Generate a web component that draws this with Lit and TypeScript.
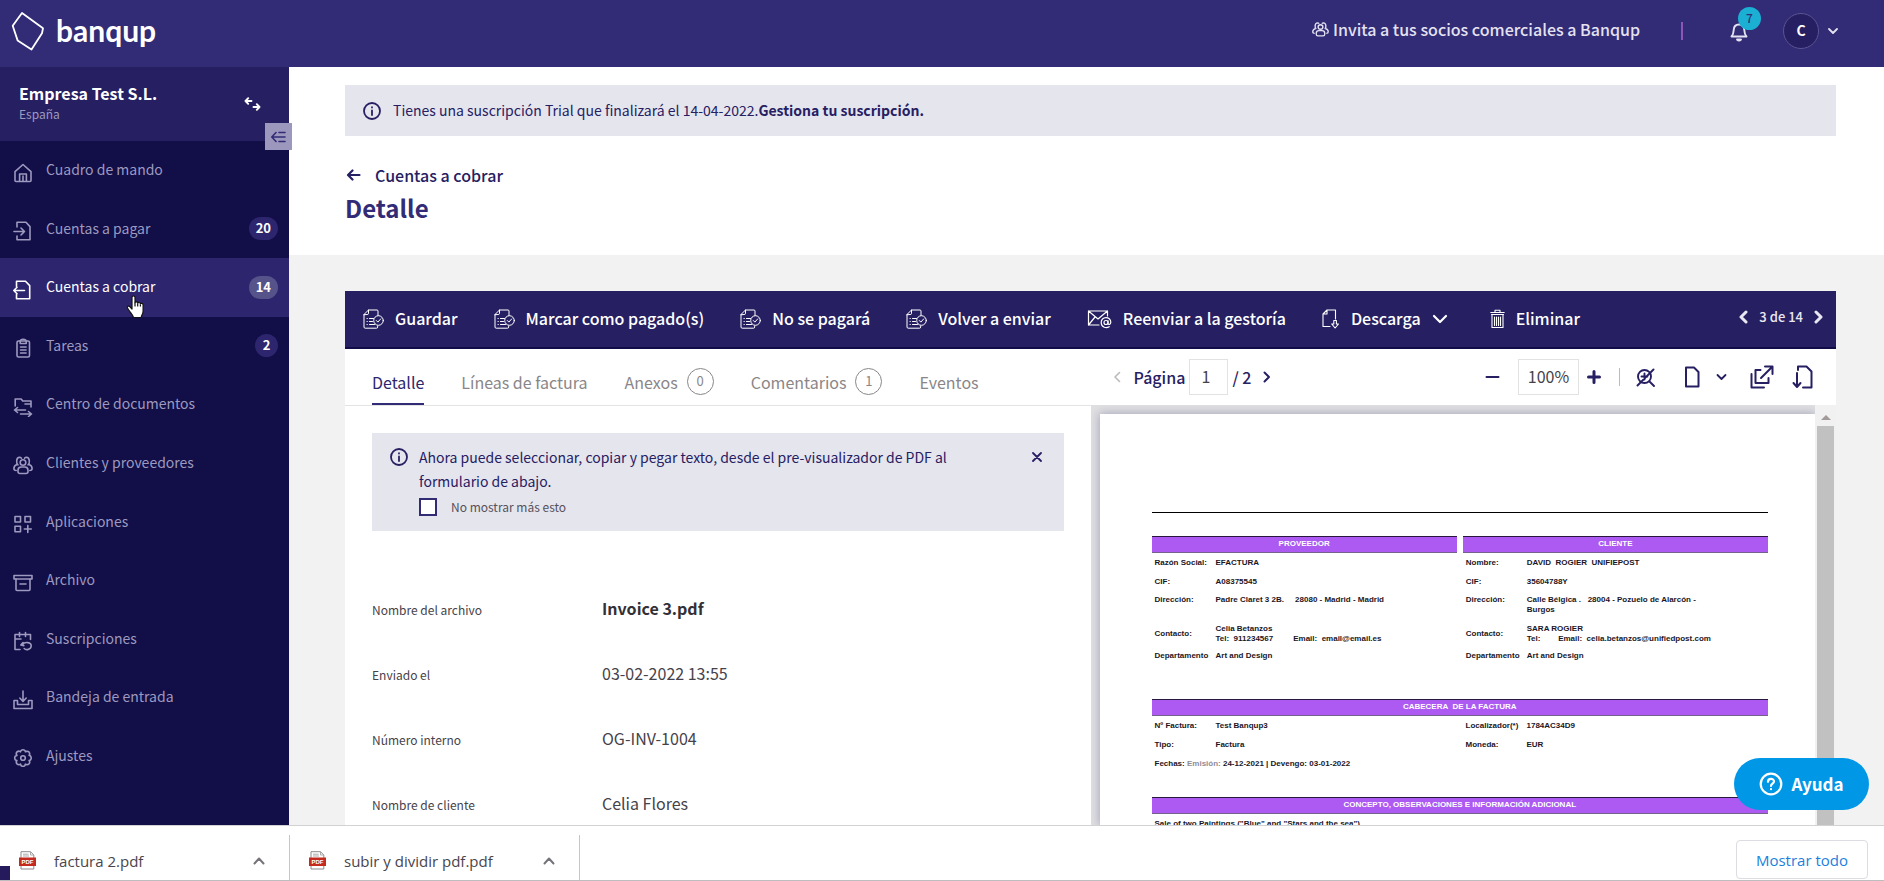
import { LitElement, html, svg, css, nothing } from "lit";
import { customElement, property, state } from "lit/decorators.js";
import { classMap } from "lit/directives/class-map.js";

const shared = css`
  :host { box-sizing: border-box; }
  *, *::before, *::after { box-sizing: border-box; }
  button { font: inherit; color: inherit; background: none; border: 0; padding: 0; margin: 0; cursor: pointer; }
  a { color: inherit; text-decoration: none; }
  ul { list-style: none; margin: 0; padding: 0; }
  svg { display: block; flex: none; }
`;

const ic = (w: number, h: number, body: unknown, sw = 1.6) => html`<svg
  width=${w} height=${h} viewBox="0 0 ${w} ${h}" fill="none" stroke="currentColor"
  stroke-width=${sw} stroke-linecap="round" stroke-linejoin="round" aria-hidden="true">${body}</svg>`;

const people = svg`
  <circle cx="10" cy="7.500" r="2.800"/>
  <path d="M5 16.500v-1.200c0-2 1.500-3.300 3.200-3.300h3.600c1.700 0 3.200 1.300 3.200 3.300v1.200q0 2-2 2H7q-2 0-2-2z"/>
  <path d="M5 9.800C3 8.500 3 2.500 6.500 2.300q1.200 0 2 .9M15 9.800c2-1.300 2-7.300-1.500-7.500q-1.200 0-2 .9"/>
  <path d="M4 9.500C2 10.200.9 11.700.9 13.500c0 1.500.9 2 2.300 2M16 9.500c2 .7 3.100 2.200 3.100 4 0 1.500-.9 2-2.300 2"/>`;

const navIcons: Record<string, unknown> = {
  home: svg`<path d="M2 8.600 10 1.500l8 7.100V17.500q0 1-1 1H3q-1 0-1-1zM6.600 18.500v-7.500h6.800v7.500M10 13v5"/>`,
  pay: svg`<path d="M4 6V1.200h9L17 5.600v13.200H4V15M1 10.500h10.500M8 7l3.500 3.500L8 14"/>`,
  collect: svg`<path d="M3.500 6.500V1.200h9l4.200 4.400v13.200H3.500v-4.300M11.500 10.500H.8M4 7.300.8 10.500 4 13.700"/>`,
  tasks: svg`<rect x="4" y="3" width="12.500" height="16" rx="1.500"/><path d="M7.200 5.500V3q.2-1.500 3-1.800 2.800.3 3 1.800v2.500zM7.500 9h5.600M7.500 12h5.600M7.500 15h5.600"/>`,
  docs: svg`<path d="M2.200 9V2h6l1.500 2H18v6M9.700 4H18M12 7h6M1.500 13h11M4.500 10.500 1.500 13l3 2.500M7.500 17h11M15.500 14.500l3 2.500-3 2.500"/>`,
  people,
  apps: svg`<rect x="2" y="2.500" width="5.500" height="5.500"/><rect x="12" y="2.500" width="5.500" height="5.500"/><rect x="2" y="12.200" width="5.500" height="5.500"/><path d="M14.800 11.500v7M11.300 15h7"/>`,
  archive: svg`<rect x="1" y="2.500" width="18" height="3.500"/><path d="M3 6v10.500q0 1 1 1h12q1 0 1-1V6M7 11h6"/>`,
  subs: svg`<path d="M7 18.500H2V3.500h15.500v5M2 8h6M6.500 1.500v4M12.500 1.500v4M10 11.500 7.800 14l3 .6M9.500 13.500c2-3.200 9-2.400 8.700 1.500-.3 3.800-5.200 4.400-7 2.500"/>`,
  inbox: svg`<path d="M10 1v10M6.800 8l3.200 3.500L13.200 8M4.500 10.500H1v8h18v-8h-3.500M4.500 11v3.500h11V11"/>`,
  settings: svg`<path d="M8 2.500q2-1.600 4 0l.4 1.300 1.400-.6q2.500-.2 3 2.700l-.7 1.400 1.400.7q1.400 2 0 4l-1.400.6.700 1.400q-.3 2.600-2.900 2.800l-1.500-.7-.5 1.500q-1.900 1.400-3.900 0l-.5-1.500-1.400.7q-2.700-.2-2.900-2.900l.7-1.400-1.500-.5q-1.400-2 0-4l1.500-.6-.7-1.500q.2-2.600 2.900-2.800l1.400.7z"/><circle cx="10" cy="10" r="2.300"/>`,
};

const infoIcon = ic(20, 20, svg`<circle cx="10" cy="10" r="8"/><path d="M10 9.500v4.500M10 6.200v.4"/>`, 1.8);

@customElement("bq-header")
class BqHeader extends LitElement {
  static styles = [shared, css`
    :host { display: flex; align-items: center; height: 67px; flex: none; padding: 0 46px 5px 11px; background: #322b76; color: #e4e2f0; }
    .logo { display: flex; align-items: center; gap: 11px; color: #fff; font: 700 30px/40px Lato, "Open Sans", sans-serif; }
    .word { padding-bottom: 3px; }
    .right { margin-left: auto; display: flex; align-items: center; }
    .invite { display: flex; align-items: center; gap: 4px; font-weight: 500; font-size: 16px; line-height: 24px; padding-bottom: 4px; }
    .rule { width: 2px; height: 18px; background: #8c56b8; margin: 0 46px 0 41px; }
    .bell { position: relative; width: 20px; height: 24px; }
    .count { position: absolute; left: 9px; top: -12px; width: 23px; height: 23px; border-radius: 50%; background: #1aafd3; color: #322b76; font: 500 12px/22px "Noto Sans CJK SC", sans-serif; text-align: center; }
    .user { display: flex; align-items: center; gap: 9px; margin-left: 34px; }
    .avatar { width: 36px; height: 36px; border-radius: 50%; border: 1px solid #5a5492; background: #262062; color: #fff; font-weight: 700; font-size: 14px; line-height: 32px; text-align: center; }
  `];
  render() {
    return html`
      <a class="logo" href="#">
        ${ic(34, 40, svg`<path d="M11 2 32 17.300 31 22.300 20.500 38.500 6.600 29.400 1.700 14.700z"/>`, 1.8)}
        <span class="word">banqup</span>
      </a>
      <div class="right">
        <a class="invite" href="#"><svg width="17" height="16" viewBox="0 0 20 20" preserveAspectRatio="none" fill="none" stroke="currentColor" stroke-width="1.600">${people}</svg>Invita a tus socios comerciales a Banqup</a>
        <span class="rule"></span>
        <button class="bell" aria-label="Notificaciones">
          ${ic(20, 24, svg`<path d="M2.500 17.500c2-2 2-3 2.200-6.500.2-3.500 2-5.500 5.300-5.500s5.100 2 5.300 5.500c.2 3.500.2 4.500 2.200 6.500zM8 20.500q2 2.200 4 0z"/>`, 1.9)}
          <span class="count">7</span>
        </button>
        <button class="user" aria-label="Cuenta"><span class="avatar">C</span>${ic(10, 8, svg`<path d="m1 2 4 4 4-4"/>`, 1.8)}</button>
      </div>`;
  }
}

const NAV = [
  { label: "Cuadro de mando", icon: "home" },
  { label: "Cuentas a pagar", icon: "pay", count: 20 },
  { label: "Cuentas a cobrar", icon: "collect", count: 14 },
  { label: "Tareas", icon: "tasks", count: 2 },
  { label: "Centro de documentos", icon: "docs" },
  { label: "Clientes y proveedores", icon: "people" },
  { label: "Aplicaciones", icon: "apps" },
  { label: "Archivo", icon: "archive" },
  { label: "Suscripciones", icon: "subs" },
  { label: "Bandeja de entrada", icon: "inbox" },
  { label: "Ajustes", icon: "settings" },
];

@customElement("bq-sidebar")
class BqSidebar extends LitElement {
  @state() active = "Cuentas a cobrar";
  static styles = [shared, css`
    :host { display: flex; flex-direction: column; width: 289px; flex: none; background: #110e48; color: #9d99bf; position: relative; z-index: 1; }
    .company { display: flex; align-items: center; justify-content: space-between; height: 74px; flex: none; padding: 0 28px 0 19px; background: #262062; }
    .name { color: #fff; font-weight: 700; font-size: 16px; line-height: 24px; }
    .country { font-size: 12px; line-height: 18px; padding-bottom: 4px; }
    .company button { color: #fff; }
    .collapse { position: absolute; left: 265px; top: 56px; width: 27px; height: 27px; background: #9c97bd; color: #322b76; display: grid; place-items: center; }
    ul { flex: 1; display: grid; grid-auto-rows: minmax(58px, 1fr); padding-bottom: 40px; }
    li { position: relative; display: grid; }
    a { display: flex; align-items: center; padding: 0 11px 0 13px; font-size: 14px; line-height: 20px; }
    a svg { margin: 5px 13px 0 0; }
    .label { padding-bottom: 2px; }
    .on { background: #2d266e; color: #fff; }
    .count { margin-left: auto; min-width: 23px; height: 23px; padding: 0 7px; border-radius: 12px; background: #2d266e; color: #fff; font-weight: 700; font-size: 13px; line-height: 22px; text-align: center; }
    .on .count { background: #56528a; }
    .pointer { position: absolute; left: 126px; top: 37px; }
  `];
  render() {
    return html`
      <div class="company">
        <div><div class="name">Empresa Test S.L.</div><div class="country">España</div></div>
        <button aria-label="Cambiar de empresa">${ic(17, 14, svg`<path d="M1.500 4h6M4.200 1.200 1.500 4l2.700 2.800M9.500 10h6M12.800 7.200l2.700 2.800-2.700 2.800"/>`, 1.9)}</button>
      </div>
      <button class="collapse" aria-label="Contraer menú">${ic(15, 14, svg`<path d="M1 7h13M5 2.500.8 7 5 11.500M8 2.500h6M8 11.500h6"/>`)}</button>
      <ul>${NAV.map(n => html`<li>
        <a href="#" class=${classMap({ on: n.label === this.active })} @click=${(e: Event) => { e.preventDefault(); this.active = n.label; }}>
          ${ic(20, 20, navIcons[n.icon])}<span class="label">${n.label}</span>
          ${n.count ? html`<span class="count">${n.count}</span>` : nothing}
        </a>
        ${n.icon === "collect" ? html`<svg class="pointer" width="19" height="24" viewBox="0 0 19 24" fill="#fff" stroke="#111" stroke-width="1.200" stroke-linejoin="round"><path d="M6 2.500c0-2 3-2 3 0v5.200c.3-1.200 2.700-1 2.700.5.400-1.200 2.700-.8 2.700.7.500-1 2.700-.8 2.700 1V16c0 3-1.600 4-1.900 6.500H7.500C6.800 19.500 3.500 17 1.500 13c-.8-1.700 1.200-2.600 2.500-1.200L6 14z"/><path d="M9 7.500v4M11.700 8.500v3M14.400 9.500v2"/></svg>` : nothing}
      </li>`)}</ul>`;
  }
}

const docCheck = ic(21, 20, svg`<path d="M5.500 1H14q1 0 1 1v4.500M1 5.500V18q0 1.200 1.200 1.200H13.500q1.200 0 1.200-1.200v-1M1 5.500 5.500 1v3.500q0 1-1 1zM4 9.500h.3M6.500 9.500h4M4 12.500h.3M6.500 12.500h3M4 15.500h.3M6.500 15.500h5"/><circle cx="15.500" cy="11.500" r="4.800"/><path d="m13.300 11.500 1.600 1.600 2.800-3.200"/>`, 1);
const ACTIONS = [
  { label: "Guardar", icon: docCheck },
  { label: "Marcar como pagado(s)", icon: docCheck },
  { label: "No se pagará", icon: docCheck },
  { label: "Volver a enviar", icon: docCheck },
  { label: "Reenviar a la gestoría", icon: ic(25, 20, svg`<path d="M12 16H1.500V2h19v5M1.500 2 11 10l9.500-8M1.500 16l6.500-8"/><circle cx="19" cy="13.500" r="2"/><path d="M21 11.500v3c.2 1.600 2.800 1.300 2.800-1.200 0-6.600-10-6-9.600.4.200 5 5.300 5.800 8 4"/>`, 1.2) },
  { label: "Descarga", icon: ic(18, 20, svg`<path d="M8 17.500H1V5l4-4h8.500v9M5 1v4H1"/><path d="M11.800 11.500h2.600v3.500h2.100L13.100 19l-3.400-4h2.100z"/>`, 1.1), more: true },
  { label: "Eliminar", icon: ic(15, 20, svg`<path d="M.8 3.500h13.400M5 3.200V1.200h5v2M2 6v12.500h11V6M1.500 5.500h12M4.500 8v8.500M6.500 8v8.500M8.500 8v8.500M10.500 8v8.500"/>`, 1.1) },
];

@customElement("bq-actions")
class BqActions extends LitElement {
  static styles = [shared, css`
    :host { display: flex; align-items: center; height: 58px; padding: 0 12px 0 18px; gap: 36px; background: #262062; border-bottom: 2px solid #120c48; color: #fff; font-size: 16px; line-height: 24px; white-space: nowrap; }
    .act { display: flex; align-items: center; gap: 11px; font-weight: 500; }
    .label { padding-bottom: 2px; }
    .pager { margin-left: auto; display: flex; align-items: center; gap: 11px; font-weight: 500; font-size: 13px; line-height: 20px; color: #e9e8f2; padding-bottom: 4px; }
    .more { margin-right: 6px; }
  `];
  render() {
    return html`
      ${ACTIONS.map(a => html`<button class="act">${a.icon}<span class="label">${a.label}</span>${a.more ? html`<span class="more">${ic(16, 10, svg`<path d="m2 2 6 6 6-6"/>`, 2.2)}</span>` : nothing}</button>`)}
      <div class="pager">
        <button aria-label="Anterior">${ic(10, 14, svg`<path d="M8 2 3 7l5 5"/>`, 3)}</button>
        <span>3 de 14</span>
        <button aria-label="Siguiente">${ic(10, 14, svg`<path d="m2 2 5 5-5 5"/>`, 3)}</button>
      </div>`;
  }
}

const TABS: { label: string; count?: number }[] = [
  { label: "Detalle" }, { label: "Líneas de factura" }, { label: "Anexos", count: 0 }, { label: "Comentarios", count: 1 }, { label: "Eventos" },
];
const FIELDS = [
  ["Nombre del archivo", "Invoice 3.pdf"],
  ["Enviado el", "03-02-2022 13:55"],
  ["Número interno", "OG-INV-1004"],
  ["Nombre de cliente", "Celia Flores"],
];

@customElement("bq-detail")
class BqDetail extends LitElement {
  @state() tab = "Detalle";
  @state() notice = true;
  static styles = [shared, css`
    :host { display: block; flex: 1 1 0; min-width: 0; background: #fff; }
    .tabs { display: flex; gap: 37px; height: 57px; padding: 11px 27px 0; border-bottom: 1px solid #e3e3e3; }
    .tab { display: flex; align-items: center; gap: 9px; color: #8a8688; font-size: 16px; line-height: 24px; border-bottom: 2px solid transparent; white-space: nowrap; }
    .tab.on { color: #2d266e; border-color: #322b76; }
    .num { width: 27px; height: 27px; border: 1px solid #8a8688; border-radius: 50%; font-size: 13px; line-height: 23px; text-align: center; }
    .body { padding: 27px; }
    .notice { display: flex; align-items: flex-start; background: #e5e5ee; color: #262062; padding: 12px 22px 12px 17px; font-size: 14px; line-height: 24px; }
    .notice > svg { margin: 2px 10px 0 0; }
    .copy { flex: 1; max-width: 560px; }
    .check { display: flex; align-items: center; gap: 14px; height: 24px; margin-top: 2px; font-size: 12px; color: #55505a; }
    .check input { appearance: none; width: 18px; height: 18px; margin: 0; border: 2px solid #322b76; background: #fff; }
    .check input:checked { background: #322b76; box-shadow: inset 0 0 0 2px #fff; }
    .close { margin: 7px 0 0 auto; }
    dl { margin: 45px 0 0; }
    .row { display: grid; grid-template-columns: 230px 1fr; align-items: baseline; height: 65px; line-height: 65px; color: #46424a; }
    dt { font-size: 12px; } dd { margin: 0; font-size: 16px; }
    .row:first-child dd { font-weight: 700; color: #333036; }
  `];
  render() {
    return html`
      <div class="tabs" role="tablist">${TABS.map(t => html`<button role="tab" class=${classMap({ tab: true, on: t.label === this.tab })} @click=${() => (this.tab = t.label)}>${t.label}${t.count !== undefined ? html`<span class="num">${t.count}</span>` : nothing}</button>`)}</div>
      <div class="body">
        ${this.notice ? html`<div class="notice">
          ${infoIcon}
          <div class="copy">Ahora puede seleccionar, copiar y pegar texto, desde el pre-visualizador de PDF al formulario de abajo.
            <label class="check"><input type="checkbox">No mostrar más esto</label>
          </div>
          <button class="close" aria-label="Cerrar" @click=${() => (this.notice = false)}>${ic(10, 10, svg`<path d="m1 1 8 8M9 1 1 9"/>`, 1.8)}</button>
        </div>` : nothing}
        <dl>${FIELDS.map(([k, v]) => html`<div class="row"><dt>${k}</dt><dd>${v}</dd></div>`)}</dl>
      </div>`;
  }
}

@customElement("bq-invoice")
class BqInvoice extends LitElement {
  static styles = [shared, css`
    :host { display: block; flex: 1; background: #fff; box-shadow: 0 0 9px 1px #a9a9bd; padding: 98px 47px 0 52px; margin: 9px 0 0 9px; font: 700 8px/10px "Liberation Sans", Arial, sans-serif; color: #1b1626; }
    hr { height: 1px; border: 0; background: #000; margin: 0 0 23px; }
    .two { display: grid; grid-template-columns: 1fr 1fr; gap: 6px; }
    table { width: 100%; border-collapse: collapse; table-layout: fixed; }
    caption { height: 17px; background: #ad5af2; color: #fff; border-top: 1px solid #2a1740; border-bottom: 1px solid #76608c; line-height: 14px; text-align: center; white-space: pre; }
    th { width: 61px; text-align: left; font-weight: 700; white-space: nowrap; }
    th, td { height: 19px; padding: 0 0 0 3px; vertical-align: middle; white-space: pre; }
    .addr th, .addr td { height: 33px; padding-top: 4px; vertical-align: top; }
    .addr td { white-space: pre-wrap; padding-right: 60px; }
    .dept th, .dept td { height: 24px; }
    .head { margin-top: 31px; }
    .concept { margin-top: 24px; }
    .k { width: 61px; } .wide { width: 250px; }
    .soft { color: #8f8b98; }
  `];
  render() {
    return html`
      <hr>
      <div class="two">
        <table><caption>PROVEEDOR</caption>
          <tr><th>Razón Social:</th><td>EFACTURA</td></tr>
          <tr><th>CIF:</th><td>A08375545</td></tr>
          <tr class="addr"><th>Dirección:</th><td>Padre Claret 3 2B.     28080 - Madrid - Madrid</td></tr>
          <tr><th>Contacto:</th><td>${"Celia Betanzos\nTel:  911234567         Email:  email@email.es"}</td></tr>
          <tr class="dept"><th>Departamento</th><td>Art and Design</td></tr>
        </table>
        <table><caption>CLIENTE</caption>
          <tr><th>Nombre:</th><td>DAVID  ROGIER  UNIFIEPOST</td></tr>
          <tr><th>CIF:</th><td>35604788Y</td></tr>
          <tr class="addr"><th>Dirección:</th><td>Calle Bélgica .   28004 - Pozuelo de Alarcón - Burgos</td></tr>
          <tr><th>Contacto:</th><td>${"SARA ROGIER\nTel:        Email:  celia.betanzos@unifiedpost.com"}</td></tr>
          <tr class="dept"><th>Departamento</th><td>Art and Design</td></tr>
        </table>
      </div>
      <table class="head"><caption>CABECERA  DE LA FACTURA</caption>
        <colgroup><col class="k"><col class="wide"><col class="k"><col></colgroup>
        <tr><th>Nº Factura:</th><td>Test Banqup3</td><th>Localizador(*)</th><td>1784AC34D9</td></tr>
        <tr><th>Tipo:</th><td>Factura</td><th>Moneda:</th><td>EUR</td></tr>
        <tr><td colspan="4">Fechas: <span class="soft">Emisión:</span> 24-12-2021 | Devengo: 03-01-2022</td></tr>
      </table>
      <table class="concept"><caption>CONCEPTO, OBSERVACIONES E INFORMACIÓN ADICIONAL</caption>
        <tr><td>Sale of two Paintings ("Blue" and "Stars and the sea")</td></tr>
      </table>`;
  }
}

@customElement("bq-viewer")
class BqViewer extends LitElement {
  static styles = [shared, css`
    :host { display: flex; flex-direction: column; flex: 1 1 0; min-width: 0; background: #fff; color: #262062; font-size: 16px; line-height: 24px; }
    .bar { display: flex; align-items: center; height: 56px; flex: none; padding: 0 23px 0 22px; }
    .page { display: flex; align-items: center; gap: 4px; font-weight: 500; }
    .prev { color: #bbb; margin-right: 9px; } .next { margin-left: 8px; }
    input { height: 36px; border: 1px solid #e2e2e2; background: #fff; font: inherit; font-weight: 400; color: #46424a; padding: 0 0 2px; text-align: center; border-radius: 0; }
    .n { width: 39px; padding: 0 0 2px 11px; text-align: left; } .z { width: 61px; }
    .tools { margin-left: auto; display: flex; align-items: center; }
    .zoom { display: flex; align-items: center; gap: 8px; }
    .minus { margin-right: 10px; }
    .rule { width: 1px; height: 18px; background: #bbb; margin: 0 16px 0 18px; }
    .fit { margin-right: 29px; } .sheet { margin-right: 16px; } .drop { margin-right: 23px; } .open { margin-right: 18px; }
    .stage { flex: 1; min-height: 0; display: flex; background: #e0e0e2; overflow: hidden; }
    .clip { flex: 1; display: flex; overflow: hidden; }
    .scroll { width: 21px; flex: none; background: #f1f1f1; display: flex; flex-direction: column; align-items: center; padding: 10px 2px 0; }
    .up { width: 0; border: 5px solid transparent; border-top: 0; border-bottom-color: #a39a9a; margin-bottom: 6px; }
    .thumb { flex: 1; align-self: stretch; background: #c1c1c1; }
  `];
  render() {
    return html`
      <div class="bar">
        <div class="page">
          <button class="prev" aria-label="Página anterior">${ic(8, 12, svg`<path d="M6.500 1.500 2 6l4.500 4.500"/>`)}</button>
          <label for="p">Página</label><input class="n" id="p" value="1"><span>/ 2</span>
          <button class="next" aria-label="Página siguiente">${ic(8, 12, svg`<path d="M1.500 1.500 6 6l-4.500 4.500"/>`, 2)}</button>
        </div>
        <div class="tools">
          <div class="zoom">
            <button class="minus" aria-label="Reducir">${ic(15, 14, svg`<path d="M1.500 7h12"/>`, 2)}</button>
            <input class="z" aria-label="Zoom" value="100%">
            <button aria-label="Ampliar">${ic(14, 14, svg`<path d="M1.500 7h11M7 1.500v11"/>`, 3)}</button>
          </div>
          <span class="rule"></span>
          <button class="fit" aria-label="Restablecer zoom">${ic(19, 19, svg`<circle cx="8.500" cy="8.500" r="6.500"/><path d="m13.500 13.500 4.500 4.500M1.500 17.500l16-16M8.500 5.500v6M5.500 8.500h6"/>`, 1.9)}</button>
          <button class="sheet" aria-label="Página">${ic(16, 22, svg`<path d="M2 1.500h8l4.500 4.500v14.500H2z"/>`, 2)}</button>
          <button class="drop" aria-label="Opciones de página">${ic(11, 8, svg`<path d="m1.500 2 4 4 4-4"/>`, 1.8)}</button>
          <button class="open" aria-label="Abrir en ventana nueva">${ic(24, 24, svg`<path d="M1.500 9v13.500H14M5.500 5v13h13v-5M5.500 5h5M15 1.500h7.500V9M22 2 11 13"/>`, 2)}</button>
          <button aria-label="Descargar">${ic(21, 24, svg`<path d="M6 5V1.500h8.500l5 5V22.500H11M5 8v13M1.500 18 5 22l3.500-4"/>`, 2)}</button>
        </div>
      </div>
      <div class="stage"><div class="clip"><bq-invoice></bq-invoice></div><div class="scroll"><span class="up"></span><span class="thumb"></span></div></div>`;
  }
}

@customElement("bq-downloads")
class BqDownloads extends LitElement {
  @property({ type: Array }) files: string[] = [];
  static styles = [shared, css`
    :host { position: relative; display: flex; height: 56px; flex: none; padding-top: 9px; background: #fff; border-top: 1px solid #d2d2d4; border-bottom: 1px solid #bdbdc0; font: 15px/20px "Open Sans", "Noto Sans", sans-serif; color: #48454c; }
    .file { display: flex; align-items: center; gap: 18px; width: 290px; padding: 6px 24px 0 19px; border-right: 1px solid #c6c6c9; }
    .file button { margin-left: auto; color: #77737a; }
    .all { margin: 5px 16px 0 auto; width: 132px; height: 39px; border: 1px solid #dcdce2; border-radius: 4px; color: #1a7fe0; }
    .edge { position: absolute; left: 0; bottom: 0; width: 10px; height: 14px; background: #241a5c; }
    .tag { font: 700 6px "Liberation Sans", sans-serif; }
  `];
  render() {
    return html`
      ${this.files.map(f => html`<div class="file">
        <svg width="17" height="19" viewBox="0 0 17 19" aria-hidden="true"><path d="M2 .7h9.500L14.800 4v14H2z" fill="#fff" stroke="#8e8a90"/><path d="M11.500.7V4h3.300M4 3.200h5.500M4 5h6" fill="none" stroke="#aaa"/><rect y="6.500" width="17" height="8.500" fill="#c42a1e"/><text class="tag" x="8.500" y="13" text-anchor="middle" fill="#fff">PDF</text></svg>
        <span>${f}</span>
        <button aria-label="Opciones de ${f}">${ic(12, 9, svg`<path d="m1.500 7.500 4.500-5 4.500 5"/>`, 2)}</button>
      </div>`)}
      <button class="all">Mostrar todo</button>
      <span class="edge"></span>`;
  }
}

@customElement("app-root")
class AppRoot extends LitElement {
  static styles = [shared, css`
    :host { display: flex; flex-direction: column; height: 100vh; overflow: hidden; background: #f2f2f2; font-family: "Noto Sans CJK SC", "Open Sans", sans-serif; font-size: 14px; color: #262062; }
    .main { flex: 1; min-height: 0; display: flex; }
    .view { flex: 1; min-width: 0; display: flex; flex-direction: column; }
    .top { background: #fff; padding: 18px 48px 26px 56px; }
    .trial { display: flex; align-items: center; gap: 11px; height: 51px; padding: 0 17px; background: #e5e5ee; line-height: 20px; }
    .trial span { padding-bottom: 2px; }
    .trial a { font-weight: 700; }
    .back { display: inline-flex; align-items: center; gap: 14px; margin-top: 27px; padding-left: 1px; font-weight: 500; font-size: 16px; line-height: 24px; }
    h1 { margin: 0; font-weight: 700; font-size: 24px; line-height: 42px; color: #322b76; }
    .work { flex: 1; min-height: 0; display: flex; flex-direction: column; padding: 36px 48px 0 56px; }
    bq-actions { flex: none; }
    .panes { flex: 1; min-height: 0; display: flex; overflow: hidden; }
    .help { position: fixed; right: 15px; bottom: 71px; z-index: 2; width: 135px; height: 52px; border-radius: 26px; background: #0097e6; color: #fff; display: flex; align-items: center; justify-content: center; gap: 8px; font-weight: 700; font-size: 17px; line-height: 24px; }
  `];
  render() {
    return html`
      <bq-header></bq-header>
      <div class="main">
        <bq-sidebar></bq-sidebar>
        <div class="view">
          <div class="top">
            <div class="trial">${infoIcon}<span>Tienes una suscripción Trial que finalizará el 14-04-2022.<a href="#">Gestiona tu suscripción.</a></span></div>
            <a class="back" href="#">${ic(15, 12, svg`<path d="M2.500 6h11M6.500 1.500 2 6l4.500 4.500"/>`, 2.2)}Cuentas a cobrar</a>
            <h1>Detalle</h1>
          </div>
          <div class="work">
            <bq-actions></bq-actions>
            <div class="panes"><bq-detail></bq-detail><bq-viewer></bq-viewer></div>
          </div>
        </div>
      </div>
      <bq-downloads .files=${["factura 2.pdf", "subir y dividir pdf.pdf"]}></bq-downloads>
      <button class="help">${ic(24, 24, svg`<circle cx="12" cy="12" r="10.300"/><path d="M9 9.800c0-4 6-3.800 6-.3 0 2.200-3 2.200-3 4.500M12 17v.2"/>`, 2.2)}Ayuda</button>`;
  }
}
